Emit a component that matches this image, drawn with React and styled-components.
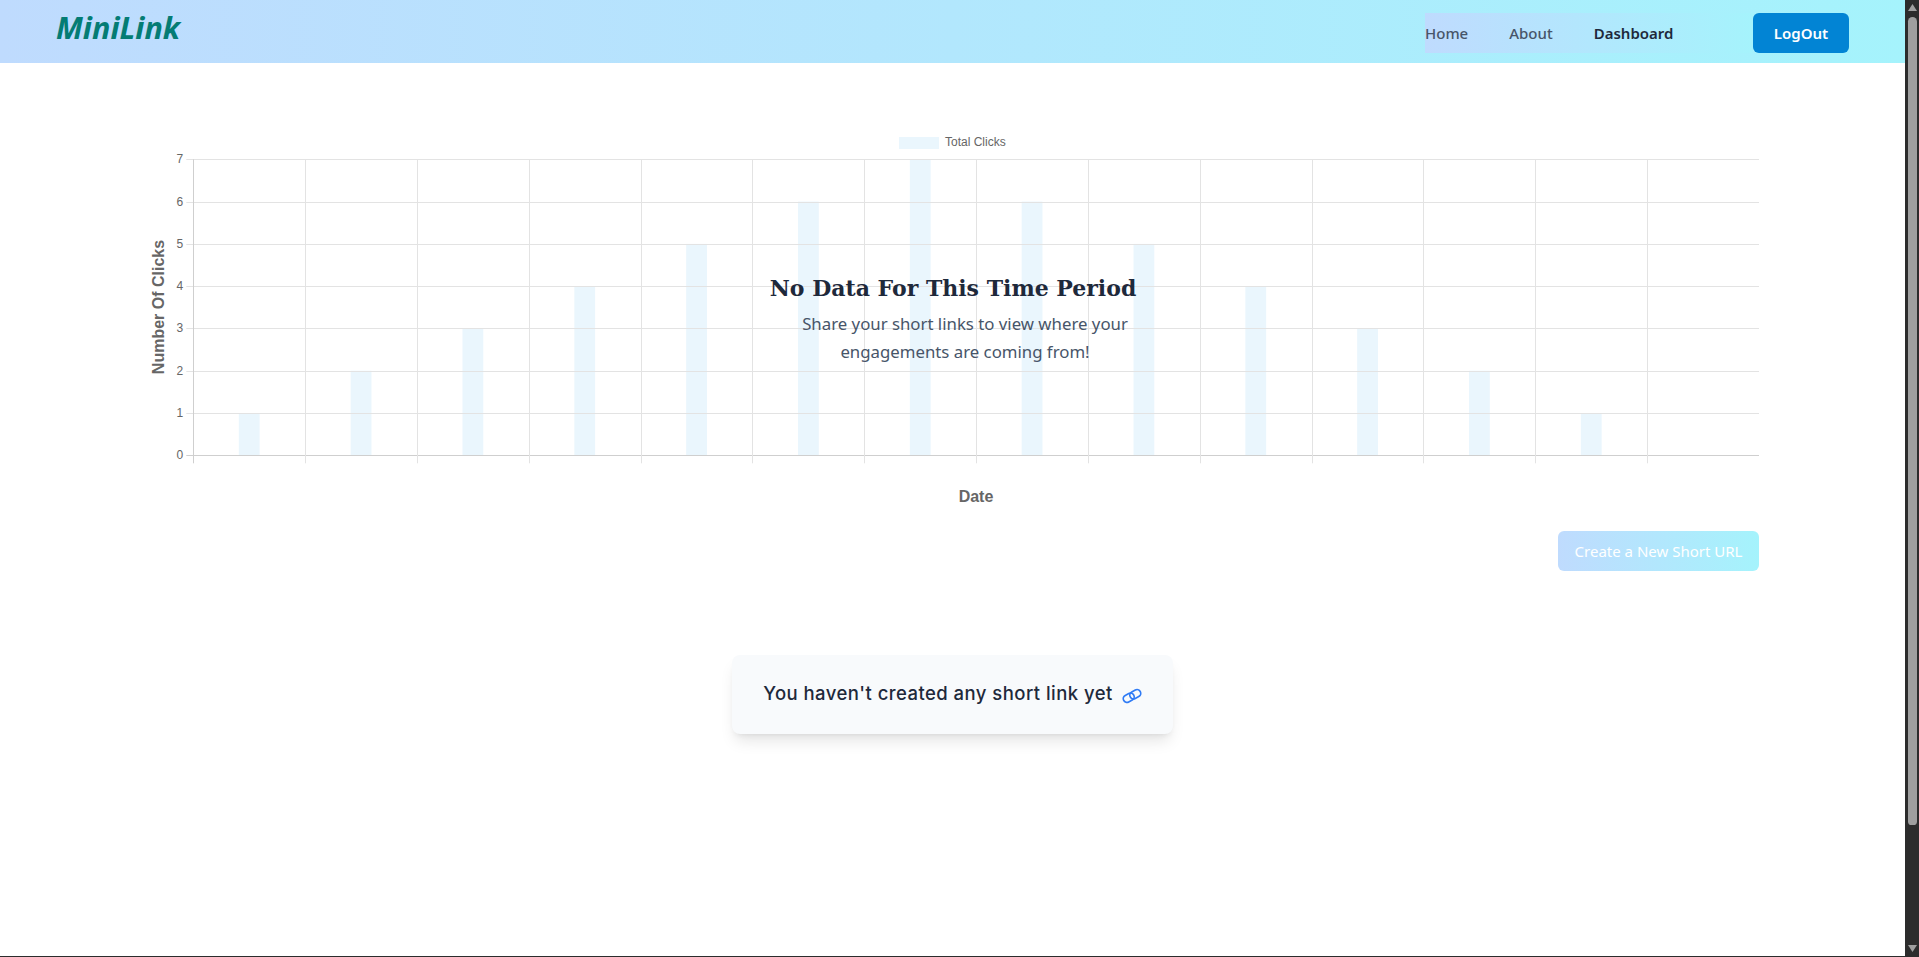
import React from "react";
import styled, { createGlobalStyle } from "styled-components";

const Global = createGlobalStyle`
  html, body { margin: 0; padding: 0; height: 100%; overflow: hidden; background: #fff; }
  #root { height: 100%; }
`;

const gradient = "linear-gradient(to right, #bfdbfe, #a5f3fc)";
const PL = 193.3, PR = 1759, PT = 159.3, PB = 455.3, CW = (PR - PL) / 14, RH = (PB - PT) / 7;
const values = [1, 2, 3, 4, 5, 6, 7, 6, 5, 4, 3, 2, 1];

const Shell = styled.div`
  display: flex;
  box-sizing: border-box;
  height: 957px;
  width: 1919px;
  border-bottom: 1px solid #2c2c2c;
`;
const Page = styled.div`
  flex: 1;
  min-width: 0;
  font-family: "Noto Sans", "Open Sans", sans-serif;
`;
const Header = styled.header`
  height: 63px;
  box-sizing: border-box;
  background: ${gradient};
  display: flex;
  align-items: center;
  justify-content: space-between;
  padding: 0 56px;
`;
const Logo = styled.div`
  font: italic 700 30.5px/1 "Noto Sans", sans-serif;
  color: #047c74;
  margin-top: -8px;
`;
const NavGroup = styled.nav`
  display: flex;
  align-items: center;
  margin-top: 3px;
`;
const Links = styled.ul`
  display: flex;
  gap: 41px;
  align-items: center;
  list-style: none;
  margin: 0;
  padding: 0;
  width: 328px;
  height: 40px;
  background: ${gradient};
`;
const NavLink = styled.li`
  font-size: 15px;
  font-weight: ${(p) => (p.$active ? 600 : 500)};
  color: ${(p) => (p.$active ? "#1e293b" : "#475569")};
`;
const LogOut = styled.button`
  width: 96px;
  height: 40px;
  border: 0;
  border-radius: 6px;
  background: #0284d4;
  color: #fff;
  font: 600 15px "Noto Sans", sans-serif;
`;
const Main = styled.main`
  padding: 0 146px 0 0;
`;
const ChartWrap = styled.section`
  position: relative;
  height: 467px;
`;
const Chart = styled.svg`
  display: block;
  width: 1759px;
  height: 467px;
`;
const Overlay = styled.div`
  position: absolute;
  left: 763px;
  top: 209px;
  width: 380px;
  text-align: center;
`;
const OverlayTitle = styled.h2`
  margin: 0;
  font: 700 22px/32px "DejaVu Serif", serif;
  color: #1e293b;
  white-space: nowrap;
`;
const OverlayText = styled.p`
  margin: 6px auto 0;
  box-sizing: border-box;
  width: 370px;
  padding: 0 0 0 24px;
  font-size: 16.8px;
  line-height: 28px;
  color: #475569;
  font-weight: 400;
`;
const Actions = styled.div`
  display: flex;
  justify-content: flex-end;
  margin-top: 1px;
`;
const CreateButton = styled.button`
  width: 201px;
  height: 40px;
  border: 0;
  border-radius: 6px;
  background: ${gradient};
  color: #fff;
  font: 400 15px "Noto Sans", sans-serif;
`;
const EmptyRow = styled.div`
  display: flex;
  justify-content: center;
  margin: 84px 0 0 146px;
`;
const EmptyCard = styled.div`
  width: 441px;
  height: 79px;
  box-sizing: border-box;
  padding-bottom: 4px;
  display: flex;
  align-items: center;
  justify-content: center;
  gap: 9px;
  border-radius: 8px;
  background: #f8fafc;
  box-shadow: 0 10px 15px -3px rgba(0, 0, 0, 0.1), 0 4px 6px -4px rgba(0, 0, 0, 0.1);
  font: 500 18.5px "Inter", sans-serif;
  color: #1e293b;
  letter-spacing: 0.45px;
`;
const CardIcon = styled.svg`
  flex: none;
  margin-top: 6px;
  overflow: visible;
`;
const Scrollbar = styled.aside`
  box-sizing: border-box;
  width: 14px;
  padding-left: 1px;
  background: #2c2c2c;
  display: flex;
  flex-direction: column;
  align-items: center;
`;
const Arrow = styled.svg`
  flex: none;
  width: 13px;
  height: 17px;
  display: block;
`;
const Thumb = styled.div`
  width: 9px;
  height: 808px;
  background: #9f9f9f;
  border-radius: 5px 5px 4px 4px;
`;
const Spacer = styled.div`
  flex: 1;
`;

function LinkIcon() {
  return (
    <CardIcon width="20" height="16" viewBox="0 0 20 16" fill="none" stroke="#2f7bf5" strokeWidth="1.7">
      <g transform="rotate(-28 10 8)">
        <rect x="0.6" y="4.3" width="11.4" height="7.4" rx="3.7" />
        <rect x="8" y="4.3" width="11.4" height="7.4" rx="3.7" />
      </g>
    </CardIcon>
  );
}

function BarChart() {
  const grid = "#e3e3e3";
  const tickFont = { fontFamily: "Liberation Sans, sans-serif", fontSize: 12, fill: "#666" };
  return (
    <Chart viewBox="0 63 1759 467">
      <rect x="899" y="137" width="40" height="12" fill="#eaf6fd" />
      <text x="945" y="146" {...tickFont}>Total Clicks</text>
      {values.map((v, i) => (
        <rect key={i} x={PL + CW * (i + 0.5) - 10.4} y={PB - v * RH} width="20.8" height={v * RH} fill="#eaf6fd" />
      ))}
      {Array.from({ length: 8 }, (_, i) => {
        const y = Math.round(PB - i * RH) + 0.5;
        return (
          <g key={i}>
            <line x1={PL - 7} x2={PR} y1={y} y2={y} stroke={i === 0 ? "#cfcfcf" : grid} />
            <text x={PL - 10} y={y + 3} textAnchor="end" {...tickFont}>{i}</text>
          </g>
        );
      })}
      {Array.from({ length: 14 }, (_, i) => {
        const x = Math.round(PL + i * CW) + 0.5;
        return <line key={i} x1={x} x2={x} y1={PT} y2={PB + 8} stroke={i === 0 ? "#cfcfcf" : grid} />;
      })}
      <text x="976" y="502" textAnchor="middle" fontFamily="Liberation Sans, sans-serif" fontSize="16" fontWeight="700" fill="#666">Date</text>
      <text transform="translate(164,307) rotate(-90)" textAnchor="middle" fontFamily="Liberation Sans, sans-serif" fontSize="16" fontWeight="700" fill="#666">Number Of Clicks</text>
    </Chart>
  );
}

export default function App() {
  return (
    <>
      <Global />
      <Shell>
        <Page>
          <Header>
            <Logo>MiniLink</Logo>
            <NavGroup>
              <Links>
                <NavLink>Home</NavLink>
                <NavLink>About</NavLink>
                <NavLink $active>Dashboard</NavLink>
              </Links>
              <LogOut>LogOut</LogOut>
            </NavGroup>
          </Header>
          <Main>
            <ChartWrap>
              <BarChart />
              <Overlay>
                <OverlayTitle>No Data For This Time Period</OverlayTitle>
                <OverlayText>Share your short links to view where your engagements are coming from!</OverlayText>
              </Overlay>
            </ChartWrap>
            <Actions>
              <CreateButton>Create a New Short URL</CreateButton>
            </Actions>
            <EmptyRow>
              <EmptyCard>
                You haven't created any short link yet
                <LinkIcon />
              </EmptyCard>
            </EmptyRow>
          </Main>
        </Page>
        <Scrollbar>
          <Arrow viewBox="0 0 13 17"><path d="M6.5 4 11 11H2z" fill="#9f9f9f" /></Arrow>
          <Thumb />
          <Spacer />
          <Arrow viewBox="0 0 13 17"><path d="M6.5 13 11 6H2z" fill="#9f9f9f" /></Arrow>
        </Scrollbar>
      </Shell>
    </>
  );
}
